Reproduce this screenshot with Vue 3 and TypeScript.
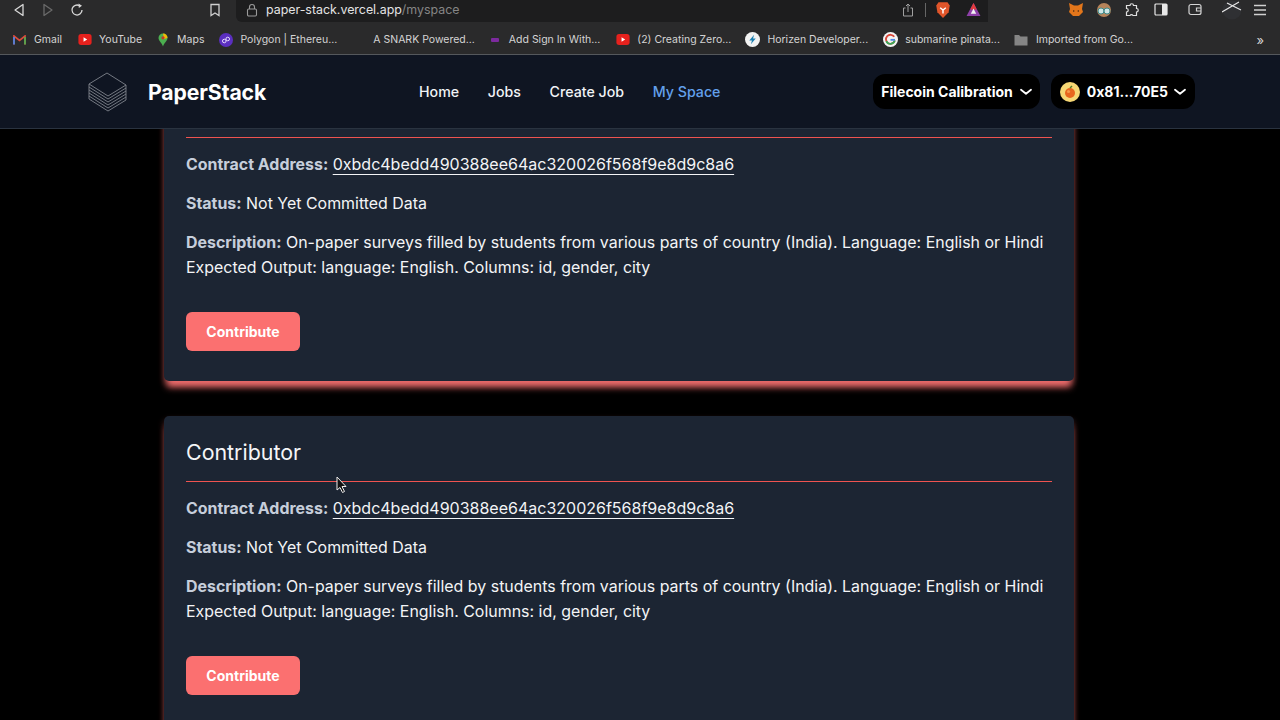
<script setup lang="ts">
const cards = [1, 2];
const address = "0xbdc4bedd490388ee64ac320026f568f9e8d9c8a6";
const navLinks = [
  { label: "Home", active: false },
  { label: "Jobs", active: false },
  { label: "Create Job", active: false },
  { label: "My Space", active: true },
];
</script>

<template>
  <div class="page">
    <div class="chrome">
      <div class="toolbar">
        <div class="nav-buttons">
          <svg width="14" height="14" viewBox="0 0 14 14"><path d="M11 1.5 L3 7 L11 12.5 Z" fill="none" stroke="#d8d8d8" stroke-width="1.3" stroke-linejoin="round"/></svg>
          <svg width="14" height="14" viewBox="0 0 14 14"><path d="M3 1.5 L11 7 L3 12.5 Z" fill="none" stroke="#6a6a6a" stroke-width="1.3" stroke-linejoin="round"/></svg>
          <svg width="14" height="14" viewBox="0 0 14 14"><path d="M12 7 A5 5 0 1 1 9.5 2.7" fill="none" stroke="#d8d8d8" stroke-width="1.3"/><path d="M8.5 0.5 L12 2.8 L8.8 5 Z" fill="#d8d8d8"/></svg>
        </div>
        <svg class="bookmark" width="12" height="14" viewBox="0 0 12 14"><path d="M2 1.5 H10 V12.5 L6 10 L2 12.5 Z" fill="none" stroke="#d0d0d0" stroke-width="1.3"/></svg>
        <div class="urlbar">
          <svg width="12" height="14" viewBox="0 0 12 14"><rect x="1.5" y="6" width="9" height="7" rx="1.2" fill="none" stroke="#9a9a9a" stroke-width="1.1"/><path d="M3.5 6 V4 A2.5 2.5 0 0 1 8.5 4 V6" fill="none" stroke="#9a9a9a" stroke-width="1.1"/></svg>
          <span class="url">paper-stack.vercel.app<span class="url-path">/myspace</span></span>
          <div class="url-actions">
            <svg width="12" height="14" viewBox="0 0 12 14"><path d="M3.5 5 H1.5 V13 H10.5 V5 H8.5" fill="none" stroke="#a0a0a0" stroke-width="1"/><path d="M6 9 V1 M4 3 L6 1 L8 3" fill="none" stroke="#a0a0a0" stroke-width="1"/></svg>
            <span class="url-sep"></span>
            <svg class="brave" width="16" height="18" viewBox="0 0 14 16"><path d="M3 1 H11 L13 4 L12 10 L7 15 L2 10 L1 4 Z" fill="#e0552a"/><path d="M4.5 6 L7 8 L9.5 6 M7 8 V11" stroke="#fff" stroke-width="1.3" fill="none"/></svg>
            <svg class="rewards" width="15" height="15" viewBox="0 0 14 14"><path d="M7 1 L13.5 13 H0.5 Z" fill="#8d3fa8"/><path d="M7 1 L10 7 H4 Z" fill="#e23b3b"/><path d="M7 6 L9.5 11 H4.5 Z" fill="#f3f3f3"/></svg>
          </div>
        </div>
        <div class="extensions">
          <svg width="16" height="15" viewBox="0 0 16 15"><path d="M1 1 L6 3.5 H10 L15 1 L14 7 L15 10 L11 14 H5 L1 10 L2 7 Z" fill="#e2761b"/><path d="M5 8 L7 9 L5 10 Z M11 8 L9 9 L11 10 Z" fill="#5a3214"/></svg>
          <svg class="e-ape" width="16" height="16" viewBox="0 0 16 16"><circle cx="8" cy="8" r="7" fill="#b5835a"/><circle cx="5" cy="9" r="3" fill="#cfe6e6" stroke="#3e8a8a"/><circle cx="11" cy="9" r="3" fill="#cfe6e6" stroke="#3e8a8a"/></svg>
          <svg class="e-puzzle" width="14" height="14" viewBox="0 0 14 14"><path d="M5 2.5 A1.7 1.7 0 0 1 8.5 2.5 H11.5 V5.5 A1.7 1.7 0 0 1 11.5 9 V12.5 H8 A1.7 1.7 0 0 0 5 12.5 H1.5 V9 A1.7 1.7 0 0 0 1.5 5.5 V2.5 Z" fill="none" stroke="#e0e0e0" stroke-width="1.2"/></svg>
          <svg class="e-panel" width="14" height="13" viewBox="0 0 14 13"><rect x="1" y="1" width="12" height="11" rx="1" fill="none" stroke="#e8e8e8" stroke-width="1.2"/><rect x="8" y="1" width="5" height="11" fill="#e8e8e8"/></svg>
          <svg class="e-wallet" width="14" height="13" viewBox="0 0 14 13"><rect x="1" y="1.5" width="12" height="10" rx="2" fill="none" stroke="#d4d4d4" stroke-width="1.2"/><path d="M13 5 H8.5 V8 H13" fill="none" stroke="#d4d4d4" stroke-width="1.2"/></svg>
          <svg class="e-avatar" width="20" height="20" viewBox="0 0 20 20"><circle cx="10" cy="10" r="9.5" fill="#2f3033"/><path d="M0 12 L17 2 M5 3 L19 10" stroke="#e8e8e8" stroke-width="1.1"/></svg>
          <svg class="e-menu" width="14" height="12" viewBox="0 0 14 12"><path d="M1 1.5 H13 M1 6 H13 M1 10.5 H13" stroke="#d0d0d0" stroke-width="1.4"/></svg>
        </div>
      </div>
      <div class="bookmarks">
        <span class="bm b-gmail">
          <svg width="13" height="10" viewBox="0 0 12 10"><path d="M0.5 9.5 V1 L6 5.5 L11.5 1 V9.5" fill="none" stroke="#d94b3d" stroke-width="1.7"/><path d="M0.5 9.5 V2" stroke="#4a86e8" stroke-width="1.7"/><path d="M11.5 9.5 V2" stroke="#4caf50" stroke-width="1.7"/></svg>
          Gmail
        </span>
        <span class="bm b-yt">
          <svg width="14" height="11" viewBox="0 0 12 10"><rect width="12" height="10" rx="2.5" fill="#e6211d"/><path d="M4.7 3 L8 5 L4.7 7 Z" fill="#fff"/></svg>
          YouTube
        </span>
        <span class="bm b-maps">
          <svg width="10" height="14" viewBox="0 0 10 14"><path d="M5 0.5 A4.5 4.5 0 0 1 9.5 5 C9.5 8 6 10 5 13.5 C4 10 0.5 8 0.5 5 A4.5 4.5 0 0 1 5 0.5 Z" fill="#4caf50"/><path d="M5 0.5 A4.5 4.5 0 0 1 9.5 5 L6 6 Z" fill="#f2b705"/><circle cx="5" cy="4.8" r="1.6" fill="#c4362b"/></svg>
          Maps
        </span>
        <span class="bm b-poly">
          <svg width="14" height="14" viewBox="0 0 14 14"><circle cx="7" cy="7" r="7" fill="#5b2fc0"/><circle cx="5.3" cy="8" r="1.8" fill="none" stroke="#e6dcff" stroke-width="1"/><circle cx="8.7" cy="6" r="1.8" fill="none" stroke="#e6dcff" stroke-width="1"/></svg>
          Polygon | Ethereu...
        </span>
        <span class="bm b-snark">A SNARK Powered...</span>
        <span class="bm b-sign">
          <svg width="10" height="4" viewBox="0 0 8 4"><rect width="8" height="4" rx="1" fill="#7d2a9e"/></svg>
          Add Sign In With...
        </span>
        <span class="bm b-yt2">
          <svg width="14" height="11" viewBox="0 0 12 10"><rect width="12" height="10" rx="2.5" fill="#e6211d"/><path d="M4.7 3 L8 5 L4.7 7 Z" fill="#fff"/></svg>
          (2) Creating Zero...
        </span>
        <span class="bm b-hz">
          <svg width="15" height="15" viewBox="0 0 14 14"><circle cx="7" cy="7" r="7" fill="#f2f2f2"/><path d="M8.5 2.5 L4 8 H6.5 L5.5 11.5 L10 6 H7.5 Z" fill="#1c7fb0"/></svg>
          Horizen Developer...
        </span>
        <span class="bm b-g">
          <svg width="15" height="15" viewBox="0 0 14 14"><circle cx="7" cy="7" r="7" fill="#f4f4f4"/><path d="M10.5 4.5 A4.2 4.2 0 1 0 11 8" fill="none" stroke="#d9483b" stroke-width="1.7"/><path d="M3.1 8.5 A4.2 4.2 0 0 0 11 8" fill="none" stroke="#3aa757" stroke-width="1.7"/><path d="M7 7.3 H11.2" stroke="#4a86e8" stroke-width="1.7"/></svg>
          submarine pinata...
        </span>
        <span class="bm b-folder">
          <svg width="14" height="12" viewBox="0 0 14 12"><path d="M0.5 1 H5 L6.5 2.5 H13.5 V11.5 H0.5 Z" fill="#858585"/></svg>
          Imported from Go...
        </span>
        <span class="more">»</span>
      </div>
    </div>

    <header class="navbar">
      <div class="brand">
        <svg class="logo" width="40" height="40" viewBox="0 0 40 40" fill="none" stroke="#7f838c" stroke-width="0.9" stroke-linejoin="round">
          <path d="M19 1 L38 13 L20 24 L1 12 Z" />
          <path d="M1 12 V15 L20 27 L38 16 V13" />
          <path d="M1 18 L20 30 L38 19" />
          <path d="M1 15 V27 M38 16 V28" />
          <path d="M1 21 L20 33 L38 22" />
          <path d="M1 24 L20 36 L38 25" />
          <path d="M1 27 L20 39 L38 28" />
        </svg>
        <span class="brand-name">PaperStack</span>
      </div>
      <nav class="links">
        <a v-for="link in navLinks" :key="link.label" :class="{ active: link.active }">{{ link.label }}</a>
      </nav>
      <div class="wallet-area">
        <button class="pill chain">
          Filecoin Calibration
          <svg width="12" height="8" viewBox="0 0 12 8"><path d="M1 1.8 L6 5.8 L11 1.8" fill="none" stroke="#fff" stroke-width="1.8" stroke-linecap="round" stroke-linejoin="round"/></svg>
        </button>
        <button class="pill account">
          <svg class="coin" width="20" height="20" viewBox="0 0 20 20"><circle cx="10" cy="10" r="10" fill="#f7d774"/><circle cx="10" cy="11" r="5" fill="#e8661e"/><circle cx="8.5" cy="9.5" r="1.6" fill="#f59a4a"/><path d="M10 6 L12 4" stroke="#4f7a2a" stroke-width="1.5"/></svg>
          0x81...70E5
          <svg width="12" height="8" viewBox="0 0 12 8"><path d="M1 1.8 L6 5.8 L11 1.8" fill="none" stroke="#fff" stroke-width="1.8" stroke-linecap="round" stroke-linejoin="round"/></svg>
        </button>
      </div>
    </header>

    <main class="content">
      <section v-for="card in cards" :key="card" class="card">
        <h2 class="title">Contributor</h2>
        <div class="rule"></div>
        <p class="row"><strong>Contract Address:</strong> <a class="addr">{{ address }}</a></p>
        <p class="row"><strong>Status:</strong> Not Yet Committed Data</p>
        <p class="row desc"><strong>Description:</strong> On-paper surveys filled by students from various parts of country (India). Language: English or Hindi Expected Output: language: English. Columns: id, gender, city</p>
        <button class="contribute">Contribute</button>
      </section>
    </main>

    <svg class="cursor" width="12" height="18" viewBox="0 0 12 18"><path d="M1 1 V14 L4 11.5 L6.5 16.5 L8.5 15.5 L6 10.5 H10 Z" fill="#111" stroke="#eee" stroke-width="1"/></svg>
  </div>
</template>

<style>
html, body { margin: 0; background: #000; overflow: hidden; }
</style>

<style scoped>
.page {
  position: relative;
  width: 1280px;
  height: 720px;
  overflow: hidden;
  display: flex;
  flex-direction: column;
  background: #000;
  font-family: Inter, "Liberation Sans", sans-serif;
}
.chrome {
  height: 54px;
  flex: none;
  background: #2a2a2b;
  border-bottom: 1px solid #55585c;
  color: #d8d8d8;
}
.toolbar {
  height: 22px;
  display: flex;
  align-items: center;
  position: relative;
}
.nav-buttons {
  display: flex;
  gap: 15px;
  margin-left: 12px;
  margin-top: -3px;
}
.bookmark { margin-left: 125px; margin-top: -3px; }
.urlbar {
  width: 752px;
  height: 22px;
  margin-left: 15px;
  background: #1d1d1e;
  border-radius: 0 0 0 6px;
  display: flex;
  align-items: center;
  box-sizing: border-box;
  padding: 0 7px 3px 10px;
  flex: none;
}
.url { margin-left: 8px; font-size: 12.4px; color: #e4e4e4; }
.url-path { color: #858585; }
.url-actions {
  margin-left: auto;
  display: flex;
  align-items: center;
}
.url-sep { width: 1px; height: 14px; background: #666; margin-left: 11px; }
.brave { margin-left: 9px; }
.rewards { margin-left: 15px; }
.extensions {
  display: flex;
  align-items: center;
  margin-left: 80px;
  margin-top: -3px;
}
.e-ape { margin-left: 12px; }
.e-puzzle { margin-left: 13px; }
.e-panel { margin-left: 15px; }
.e-wallet { margin-left: 20px; }
.e-avatar { margin-left: 20px; }
.e-menu { margin-left: 11px; }
.bookmarks {
  height: 32px;
  display: flex;
  align-items: center;
  font-size: 10.5px;
  color: #d4d4d4;
  padding: 3px 0 0 13px;
  box-sizing: border-box;
}
.bm { display: inline-flex; align-items: center; gap: 7px; white-space: nowrap; flex: none; }
.b-gmail { gap: 8px; }
.b-yt { margin-left: 16px; }
.b-maps { margin-left: 16px; gap: 9px; }
.b-poly { margin-left: 15px; }
.b-snark { margin-left: 36px; }
.b-sign { margin-left: 15px; gap: 9px; }
.b-yt2 { margin-left: 16px; }
.b-hz { margin-left: 14px; }
.b-g { margin-left: 15px; }
.b-folder { margin-left: 14px; gap: 8px; }
.more { margin-left: auto; margin-right: 16px; font-size: 13px; }
.navbar {
  height: 73px;
  flex: none;
  display: flex;
  align-items: center;
  background: #0f1522;
  border-bottom: 1px solid #2a3340;
  color: #fff;
  position: relative;
  z-index: 2;
}
.brand {
  display: flex;
  align-items: center;
  margin-left: 88px;
  width: 331px;
  flex: none;
}
.logo { flex: none; }
.brand-name {
  margin-left: 20px;
  font-size: 21.2px;
  font-weight: 700;
  letter-spacing: -0.1px;
}
.links {
  display: flex;
  gap: 28.7px;
  font-size: 14.2px;
  font-weight: 500;
  color: #f1f3f6;
}
.links .active { color: #63a0ec; }
.wallet-area {
  margin-left: auto;
  margin-right: 85px;
  display: flex;
  gap: 11px;
}
.pill {
  height: 35px;
  box-sizing: border-box;
  border: 0;
  border-radius: 12px;
  background: #000;
  color: #fff;
  font: 700 14px Inter, sans-serif;
  display: flex;
  align-items: center;
  padding: 0 8px;
  gap: 7px;
}
.account { gap: 6px; padding: 0 9px; }
.coin { margin-right: 1px; }
.content {
  flex: 1;
  min-height: 0;
  overflow: hidden;
  display: flex;
  flex-direction: column;
  align-items: flex-start;
  gap: 35px;
  margin-top: -57px;
  padding: 0 0 20px 164px;
}
.card {
  width: 866px;
  padding: 0 22px;
  height: 309px;
  flex: none;
  background: #1c2533;
  border-radius: 5px;
  box-shadow: 0 9px 7px -3px rgba(248, 113, 113, 0.95), 0 4px 6px rgba(248, 113, 113, 0.35);
  display: flex;
  flex-direction: column;
  align-items: flex-start;
  color: #f3f4f6;
}
.title {
  margin: 21px 0 0;
  font-size: 21.4px;
  line-height: 30px;
  font-weight: 400;
  color: #f5f6f8;
}
.rule {
  width: 100%;
  height: 1px;
  flex: none;
  margin-top: 14px;
  background: #ef5350;
}
.row {
  margin: 14px 0 0;
  font-size: 15.95px;
  line-height: 25px;
}
.row strong { font-weight: 700; color: #c6cedb; }
.addr { font-size: 16px; color: #f3f4f6; text-decoration: underline; text-underline-offset: 4px; text-decoration-thickness: 1px; }
.contribute {
  margin-top: 32px;
  width: 114px;
  height: 39px;
  border: 0;
  border-radius: 6px;
  background: #fb7070;
  color: #fff;
  font: 700 14px Inter, sans-serif;
}
.cursor {
  position: absolute;
  left: 336px;
  top: 476px;
  z-index: 3;
}
</style>
